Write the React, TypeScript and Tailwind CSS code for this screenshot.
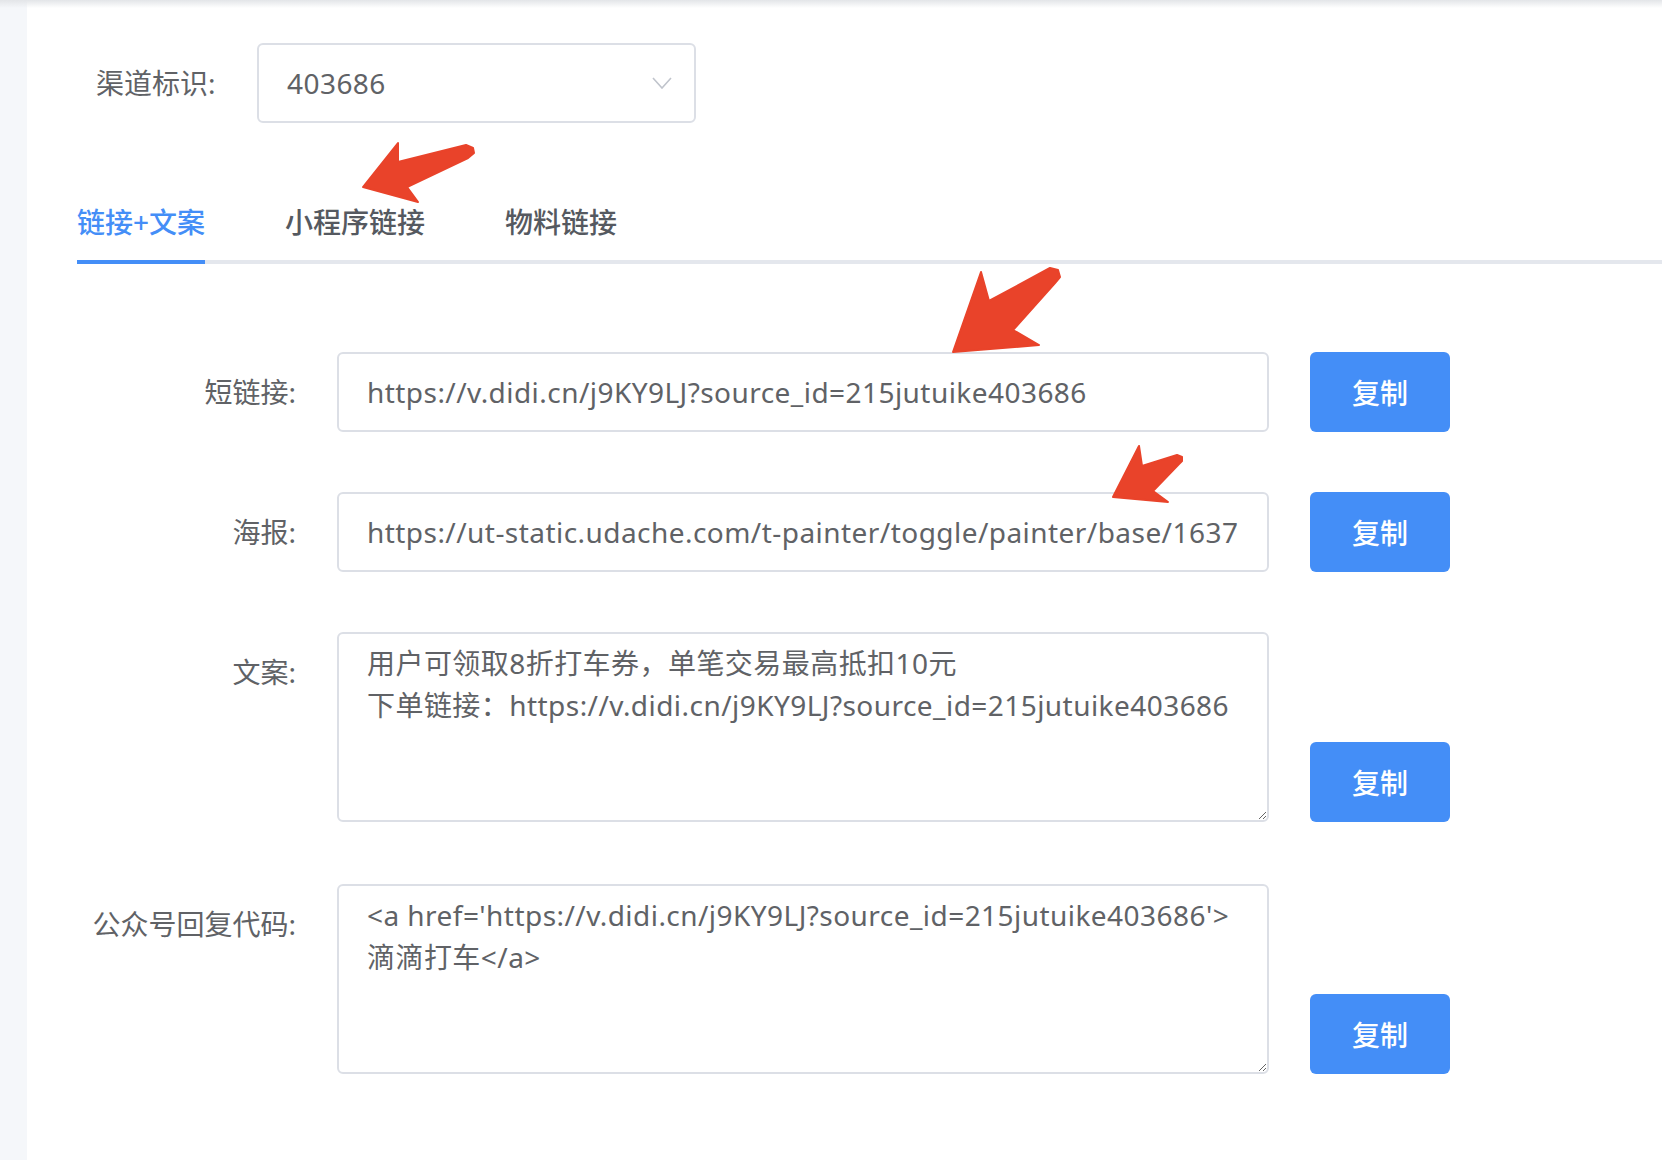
import React from "react";

const SHORT_LINK = "https://v.didi.cn/j9KY9LJ?source_id=215jutuike403686";
const POSTER = "https://ut-static.udache.com/t-painter/toggle/painter/base/1637830475632/poster.png";
const COPY_TEXT = `用户可领取8折打车券，单笔交易最高抵扣10元\n下单链接：${SHORT_LINK}`;
const REPLY_CODE = `<a href='${SHORT_LINK}'>\n滴滴打车</a>`;

const TABS = ["链接+文案", "小程序链接", "物料链接"];

function CopyButton() {
  return (
    <button className="h-[80px] w-[140px] shrink-0 rounded-[6px] bg-[#448ef7] font-['Noto_Sans_CJK_SC',sans-serif] text-[28px] font-medium text-white">
      复制
    </button>
  );
}

function FieldRow({ label, children, tall }: { label: string; children: React.ReactNode; tall?: boolean }) {
  return (
    <div className={`flex ${tall ? "items-end" : "items-center"}`}>
      <div className="w-[219px] shrink-0 self-start text-right leading-[80px] text-[#606266]">{label}</div>
      <div className="ml-[41px] w-[932px] shrink-0">{children}</div>
      <div className="ml-[41px]">
        <CopyButton />
      </div>
    </div>
  );
}

function Arrows() {
  return (
    <svg className="pointer-events-none absolute left-0 top-0" width="1662" height="1160" viewBox="0 0 1662 1160">
      <g fill="#e9432a" stroke="#e9432a" strokeWidth="2" strokeLinejoin="round">
        <polygon points="363,187 398,143 398,162 466,145 473,148 474,153 468,158 407,187 418,202" />
        <polygon points="953,352 981,272 989,301 1050,268 1058,270 1060,277 1055,283 1013,330 1039,345" />
        <polygon points="1113,497 1139,446 1142,466 1177,455 1182,457 1182,461 1179,464 1153,491 1168,502" />
      </g>
    </svg>
  );
}

export default function App() {
  return (
    <div className="relative flex h-[1160px] w-full overflow-hidden bg-white font-['Noto_Sans','Noto_Sans_CJK_SC',sans-serif] text-[28px]">
      <div className="w-[27px] shrink-0 bg-[#f5f7fa]" />

      <div className="flex-1 pl-[50px] pt-[43px]">
        {/* channel selector */}
        <div className="flex items-center pl-[19px]">
          <span className="w-[120px] text-[#606266]">渠道标识:</span>
          <div className="ml-[41px] flex h-[80px] w-[439px] items-center justify-between rounded-[6px] border-2 border-[#dcdfe6] pl-[28px] pr-[22px] tracking-[0.45px] text-[#606266]">
            <span>403686</span>
            <svg width="20" height="12" viewBox="0 0 20 12" fill="none">
              <path d="M1 1l9 10 9-10" stroke="#c0c4cc" strokeWidth="1.6" />
            </svg>
          </div>
        </div>

        {/* tabs */}
        <div className="mt-[61px] flex h-[80px] border-b-4 border-[#e4e7ed]">
          {TABS.map((t, i) => (
            <div
              key={t}
              className={`relative flex h-full items-center font-medium ${i === 0 ? "pr-[40px] text-[#448ef7]" : "px-[40px] text-[#555960]"}`}
            >
              {t}
              {i === 0 && <div className="absolute -bottom-[4px] left-0 right-[40px] h-[4px] bg-[#448ef7]" />}
            </div>
          ))}
        </div>

        {/* form */}
        <div className="mt-[88px] flex flex-col">
          <FieldRow label="短链接:">
            <input
              readOnly
              value={SHORT_LINK}
              className="h-[80px] w-full rounded-[6px] border-2 border-[#dcdfe6] px-[28px] tracking-[0.45px] text-[#606266] outline-none"
            />
          </FieldRow>
          <div className="mt-[60px]">
            <FieldRow label="海报:">
              <input
                readOnly
                value={POSTER}
                className="h-[80px] w-full rounded-[6px] border-2 border-[#dcdfe6] px-[28px] tracking-[0.45px] text-[#606266] outline-none"
              />
            </FieldRow>
          </div>
          <div className="mt-[60px]">
            <FieldRow label="文案:" tall>
              <textarea
                readOnly
                value={COPY_TEXT}
                className="block h-[190px] w-full resize-y rounded-[6px] border-2 border-[#dcdfe6] px-[28px] py-[8px] leading-[42px] tracking-[0.45px] text-[#606266] outline-none"
              />
            </FieldRow>
          </div>
          <div className="mt-[62px]">
            <FieldRow label="公众号回复代码:" tall>
              <textarea
                readOnly
                value={REPLY_CODE}
                className="block h-[190px] w-full resize-y rounded-[6px] border-2 border-[#dcdfe6] px-[28px] py-[8px] leading-[42px] tracking-[0.45px] text-[#606266] outline-none"
              />
            </FieldRow>
          </div>
        </div>
      </div>

      <div className="pointer-events-none absolute left-0 right-0 top-0 h-[8px] bg-gradient-to-b from-[#e3e5e8] to-transparent" />
      <Arrows />
    </div>
  );
}
